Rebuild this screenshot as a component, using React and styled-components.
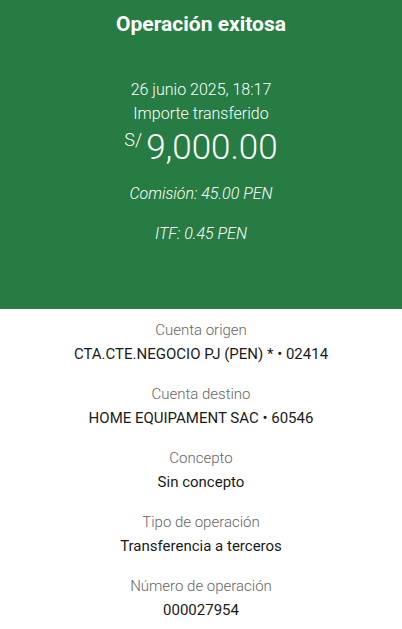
import styled, { createGlobalStyle } from "styled-components"

const Global = createGlobalStyle`
    body {
        margin: 0;
        font-family: Roboto, "Liberation Sans", sans-serif;
        background: #ffffff;
    }
`

const detalles = [
    { label: "Cuenta origen", valor: "CTA.CTE.NEGOCIO PJ (PEN) * • 02414" },
    { label: "Cuenta destino", valor: "HOME EQUIPAMENT SAC • 60546" },
    { label: "Concepto", valor: "Sin concepto" },
    { label: "Tipo de operación", valor: "Transferencia a terceros" },
    { label: "Número de operación", valor: "000027954" },
]

export default function App() {
    return (
        <Pantalla>
            <Global />
            <Cabecera>
                <Titulo>Operación exitosa</Titulo>
                <Fecha>26 junio 2025, 18:17</Fecha>
                <Subtitulo>Importe transferido</Subtitulo>
                <Monto>
                    <Moneda>S/</Moneda>
                    9,000.00
                </Monto>
                <Nota>Comisión: 45.00 PEN</Nota>
                <Nota>ITF: 0.45 PEN</Nota>
            </Cabecera>
            <Lista>
                {detalles.map((d) => (
                    <Item key={d.label}>
                        <Etiqueta>{d.label}</Etiqueta>
                        <Valor>{d.valor}</Valor>
                    </Item>
                ))}
            </Lista>
        </Pantalla>
    )
}

const Pantalla = styled.div`
    width: 402px;
    height: 629px;
    overflow: hidden;
`

const Cabecera = styled.div`
    background-color: #267c43;
    height: 309px;
    color: #ffffff;
    display: flex;
    flex-direction: column;
    align-items: center;
    box-sizing: border-box;
    padding-top: 10px;
`

const Titulo = styled.div`
    font-size: 21px;
    font-weight: 700;
    line-height: 28px;
    margin-bottom: 40px;
`

const Fecha = styled.div`
    font-size: 16px;
    font-weight: 300;
    line-height: 24px;
`

const Subtitulo = styled(Fecha)``

const Monto = styled.div`
    font-size: 35px;
    font-weight: 300;
    line-height: 40px;
    display: flex;
    align-items: flex-start;
    margin-top: 2px;
    margin-bottom: 14px;
`

const Moneda = styled.span`
    font-size: 18px;
    line-height: 22px;
    margin-right: 4px;
    margin-top: 1px;
`

const Nota = styled.div`
    font-size: 16px;
    font-style: italic;
    font-weight: 300;
    line-height: 24px;
    margin-bottom: 16px;
`

const Lista = styled.div`
    display: flex;
    flex-direction: column;
    align-items: center;
    gap: 16px;
    padding-top: 9px;
`

const Item = styled.div`
    display: flex;
    flex-direction: column;
    align-items: center;
`

const Etiqueta = styled.div`
    font-size: 15px;
    font-weight: 300;
    color: #666666;
    line-height: 24px;
`

const Valor = styled.div`
    font-size: 15px;
    font-weight: 400;
    color: #1a1a1a;
    line-height: 24px;
`
